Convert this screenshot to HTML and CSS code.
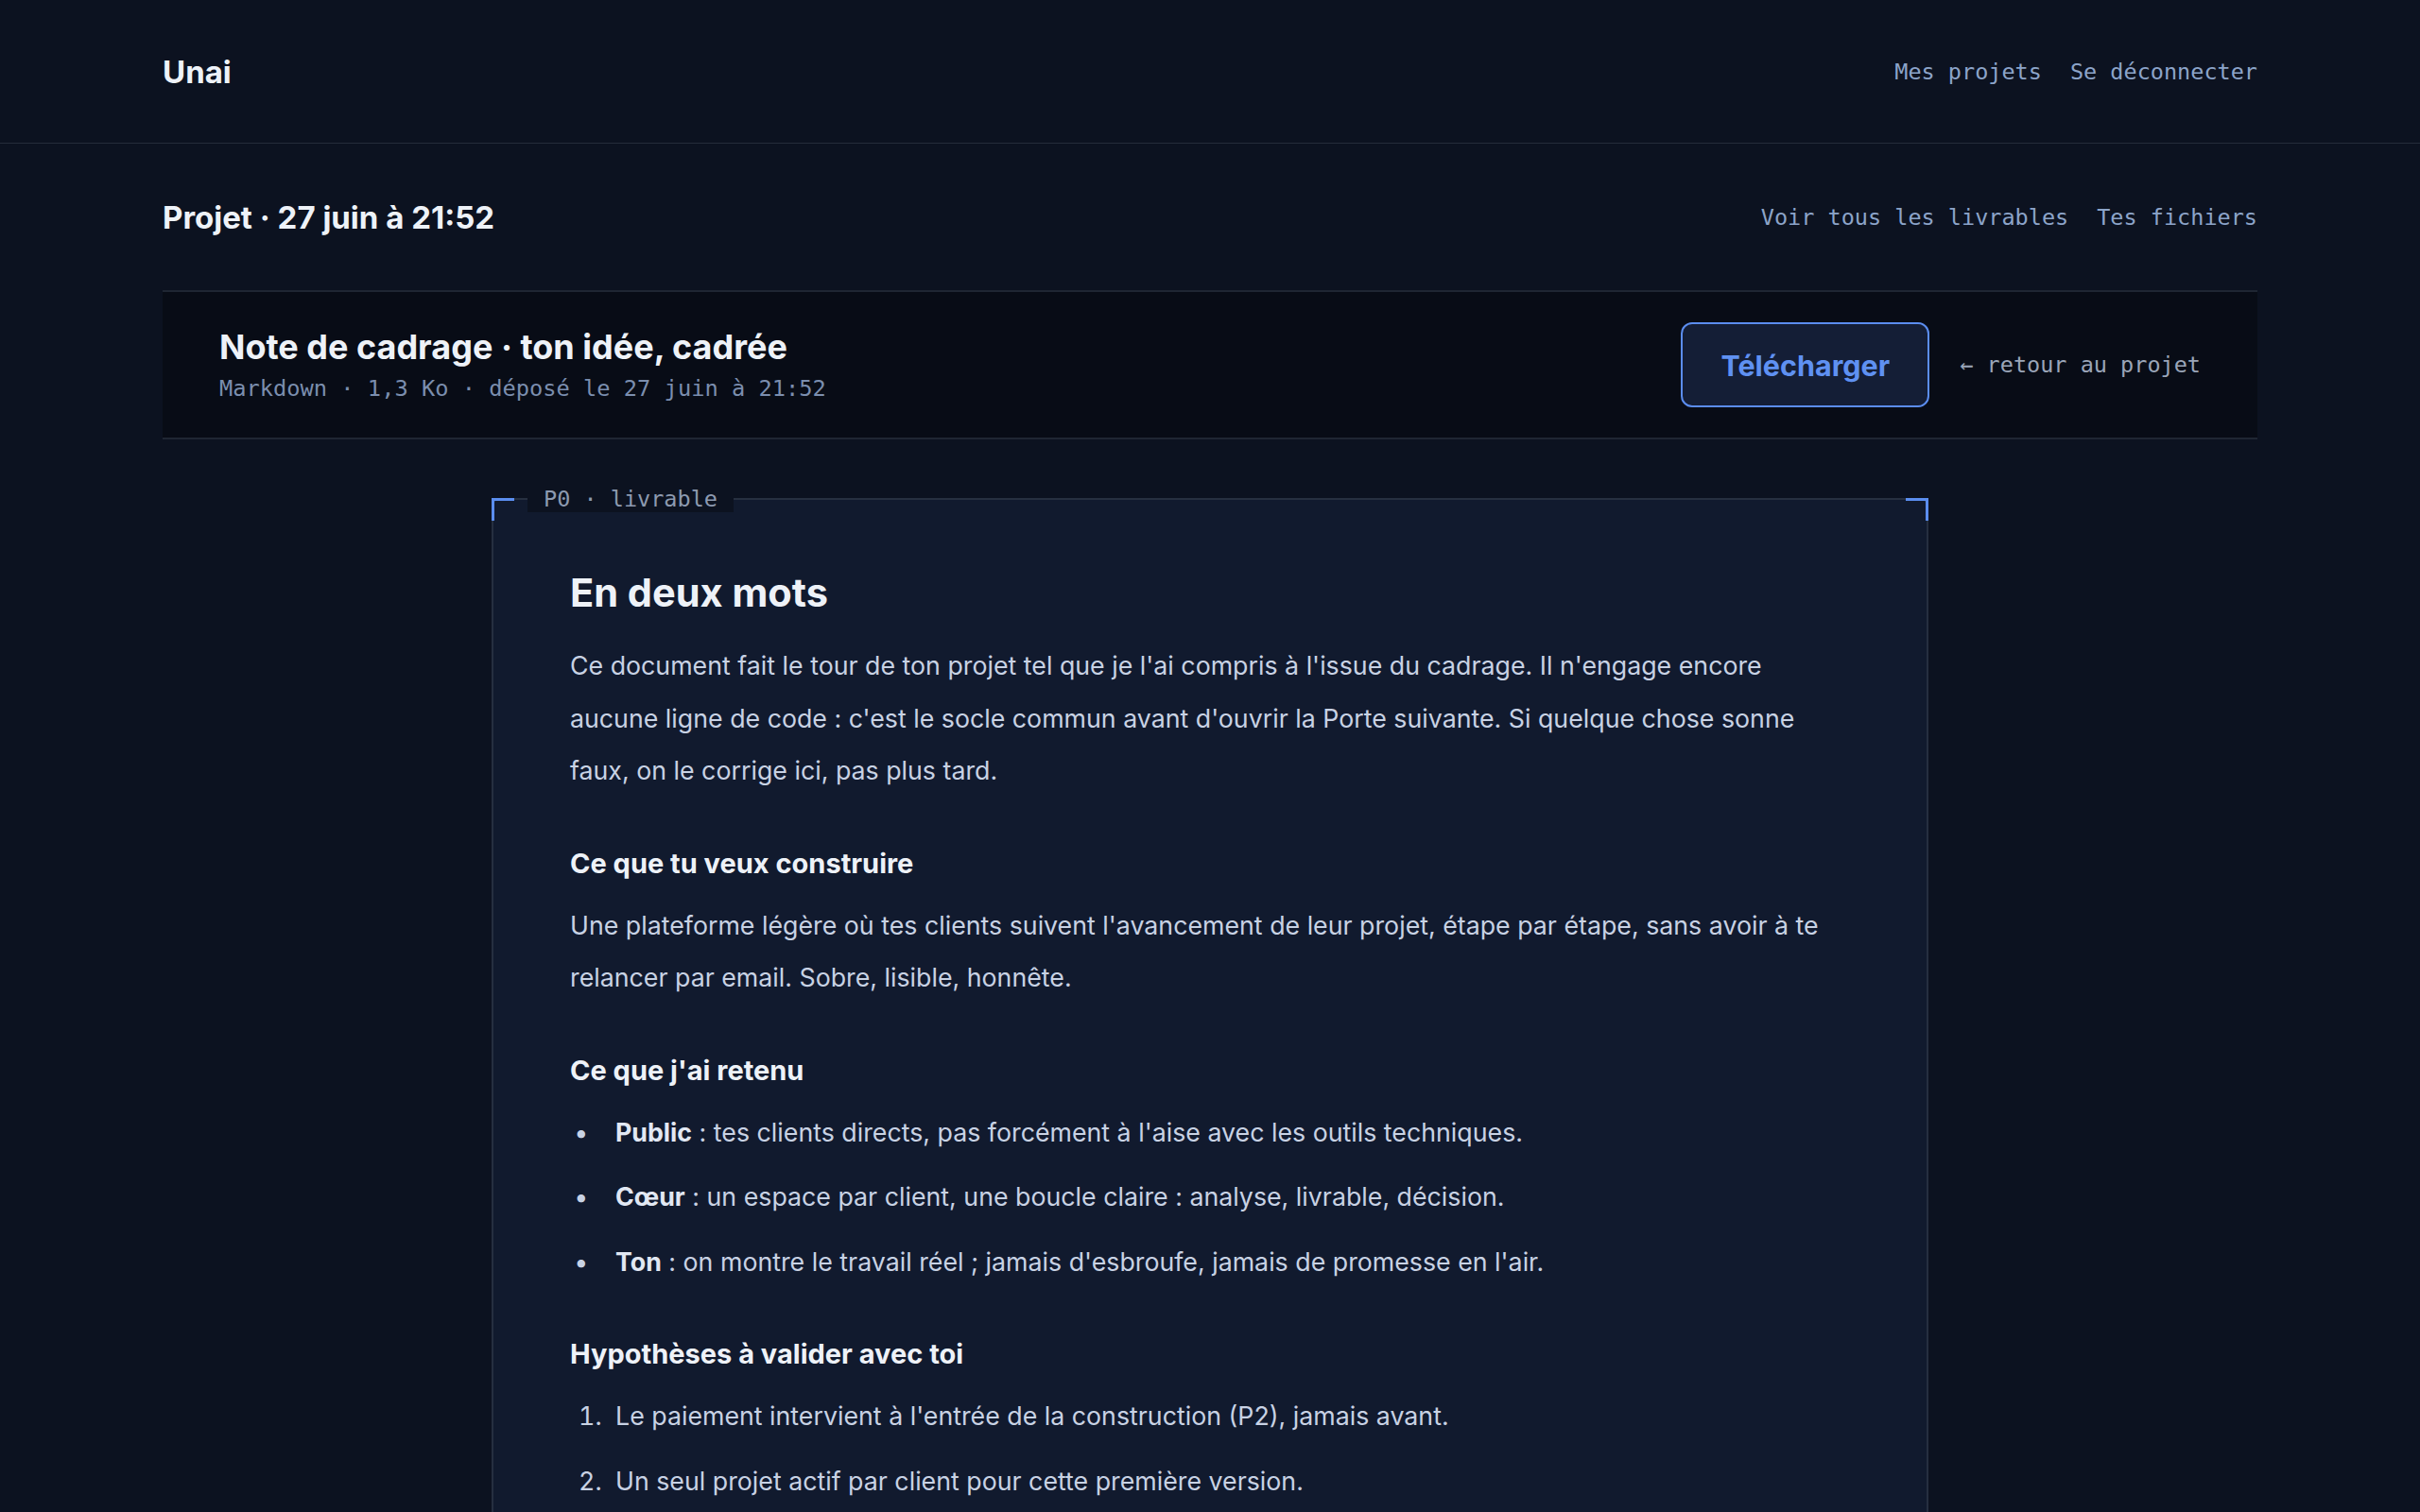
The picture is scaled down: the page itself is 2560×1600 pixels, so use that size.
FILE: index.html
```html
<!DOCTYPE html>
<html lang="fr">
<head>
  <meta charset="UTF-8" />
  <meta name="viewport" content="width=device-width, initial-scale=1.0"/>
  <title>Note de cadrage · Unai</title>
  <link rel="stylesheet" href="styles.css">
</head>
<body>
  <header class="topbar">
    <div class="wrap topbar-inner">
      <a class="brand" href="#">Unai</a>
      <nav class="links">
        <a href="#">Mes projets</a>
        <a href="#">Se déconnecter</a>
      </nav>
    </div>
  </header>

  <main class="wrap">
    <div class="page-head">
      <h1>Projet · 27 juin à 21:52</h1>
      <nav class="links">
        <a href="#">Voir tous les livrables</a>
        <a href="#">Tes fichiers</a>
      </nav>
    </div>

    <section class="doc-bar">
      <div class="doc-info">
        <h2>Note de cadrage · ton idée, cadrée</h2>
        <p class="meta">Markdown · 1,3 Ko · déposé le 27 juin à 21:52</p>
      </div>
      <div class="doc-actions">
        <a class="btn" href="#">Télécharger</a>
        <a class="back" href="#">← retour au projet</a>
      </div>
    </section>

    <article class="sheet">
      <span class="corner corner-tl"></span>
      <span class="corner corner-tr"></span>
      <span class="sheet-tag">P0 · livrable</span>
      <div class="prose">
        <h2>En deux mots</h2>
        <p>Ce document fait le tour de ton projet tel que je l'ai compris à l'issue du cadrage. Il n'engage encore aucune ligne de code : c'est le socle commun avant d'ouvrir la Porte suivante. Si quelque chose sonne faux, on le corrige ici, pas plus tard.</p>

        <h3>Ce que tu veux construire</h3>
        <p>Une plateforme légère où tes clients suivent l'avancement de leur projet, étape par étape, sans avoir à te relancer par email. Sobre, lisible, honnête.</p>

        <h3>Ce que j'ai retenu</h3>
        <ul>
          <li><strong>Public</strong> : tes clients directs, pas forcément à l'aise avec les outils techniques.</li>
          <li><strong>Cœur</strong> : un espace par client, une boucle claire : analyse, livrable, décision.</li>
          <li><strong>Ton</strong> : on montre le travail réel ; jamais d'esbroufe, jamais de promesse en l'air.</li>
        </ul>

        <h3>Hypothèses à valider avec toi</h3>
        <ol>
          <li>Le paiement intervient à l'entrée de la construction (P2), jamais avant.</li>
          <li>Un seul projet actif par client pour cette première version.</li>
        </ol>
      </div>
    </article>
  </main>
</body>
</html>
```

FILE: styles.css
```css
* { margin: 0; padding: 0; box-sizing: border-box; }
body {
  font-family: Inter, "Noto Sans", sans-serif;
  background: #0c1220;
  color: #c8d2e4;
}
a { text-decoration: none; color: inherit; }
.wrap {
  padding: 0 172px;
}

/* top bar */
.topbar {
  height: 152px;
  border-bottom: 1px solid #252c3a;
}
.topbar-inner {
  height: 100%;
  display: flex;
  align-items: center;
  justify-content: space-between;
}
.brand {
  font-size: 33px;
  font-weight: 700;
  color: #eef2f8;
}
.links {
  display: flex;
  gap: 30px;
  font-family: "DejaVu Sans Mono", monospace;
  font-size: 23.5px;
  color: #8ca4c9;
}

/* page title */
.page-head {
  height: 155px;
  display: flex;
  align-items: center;
  justify-content: space-between;
}
.page-head h1 {
  font-size: 33px;
  font-weight: 700;
  color: #eef2f8;
}

/* file bar */
.doc-bar {
  display: flex;
  align-items: center;
  justify-content: space-between;
  height: 158px;
  padding: 0 60px;
  background: #080c16;
  border-top: 2px solid #1f2633;
  border-bottom: 2px solid #1f2633;
}
.doc-info h2 {
  font-size: 36px;
  font-weight: 700;
  line-height: 40px;
  color: #eef2f8;
}
.meta {
  margin-top: 10px;
  font-family: "DejaVu Sans Mono", monospace;
  font-size: 23.7px;
  color: #7b8eae;
}
.doc-actions {
  display: flex;
  align-items: center;
  gap: 32px;
}
.btn {
  display: inline-flex;
  align-items: center;
  justify-content: center;
  width: 263px;
  height: 90px;
  border: 2px solid #5b8def;
  border-radius: 12px;
  background: #141e36;
  color: #5f91f2;
  font-size: 30.5px;
  font-weight: 700;
}
.back {
  font-family: "DejaVu Sans Mono", monospace;
  font-size: 23.5px;
  color: #9aa5b8;
}

/* document sheet */
.sheet {
  position: relative;
  width: 1520px;
  margin: 62px auto 0;
  padding: 75px 84px 80px 81px;
  background: #111a2e;
  border: 2px solid #262f40;
  border-radius: 8px;
}
.corner {
  position: absolute;
  top: -2px;
  width: 24px;
  height: 24px;
  border-top: 3px solid #5b8def;
}
.corner-tl {
  left: -2px;
  border-left: 3px solid #5b8def;
}
.corner-tr {
  right: -2px;
  border-right: 3px solid #5b8def;
}
.sheet-tag {
  position: absolute;
  top: -15px;
  left: 36px;
  padding: 0 17px;
  line-height: 28px;
  background: #0c1220;
  font-family: "DejaVu Sans Mono", monospace;
  font-size: 23.5px;
  color: #8d9ab0;
}

.prose {
  font-size: 26.75px;
  line-height: 55.5px;
}
.prose h2 {
  font-size: 41.5px;
  font-weight: 700;
  line-height: 46px;
  color: #eef2f8;
  margin-bottom: 27px;
}
.prose h3 {
  font-size: 29px;
  font-weight: 700;
  line-height: 38px;
  color: #eef2f8;
  margin: 51px 0 19px;
}
.prose ul,
.prose ol {
  padding-left: 48px;
}
.prose ul li::marker {
  content: "•\00a0\00a0\00a0\00a0";
}
.prose ol li::marker {
  content: counter(list-item) ".\00a0\00a0";
}
.prose li + li {
  margin-top: 13px;
}
.prose strong {
  font-weight: 700;
  color: #e2e8f3;
}
```
